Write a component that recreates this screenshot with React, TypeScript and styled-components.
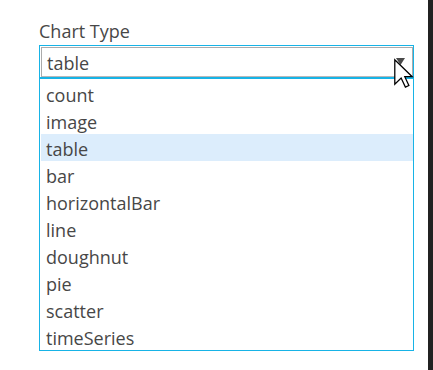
import styled, { createGlobalStyle } from 'styled-components';

const options = [
  'count',
  'image',
  'table',
  'bar',
  'horizontalBar',
  'line',
  'doughnut',
  'pie',
  'scatter',
  'timeSeries',
];

const selected = 'table';

export default function App() {
  return (
    <Page>
      <GlobalStyle />
      <Panel>
        <Label>Chart Type</Label>
        <Dropdown>
          <SelectBox>
            <SelectValue>{selected}</SelectValue>
            <Caret viewBox="0 0 9 7">
              <path d="M0 0 L9 0 L4.5 7 Z" fill="#4a4a4a" />
            </Caret>
          </SelectBox>
          <Options>
            {options.map((option) => (
              <Option key={option} $active={option === selected}>
                {option}
              </Option>
            ))}
          </Options>
        </Dropdown>
        <Cursor viewBox="0 0 12 19" preserveAspectRatio="none">
          <path
            d="M0.5 0.5 L0.5 16.5 L4.5 12.5 L7.2 18.4 L9.4 17.4 L6.8 11.6 L11.5 11.6 Z"
            fill="#fff"
            stroke="#000"
            strokeWidth="0.8"
            strokeLinejoin="miter"
          />
        </Cursor>
      </Panel>
      <ScrollEdge />
    </Page>
  );
}

const GlobalStyle = createGlobalStyle`
  html, body {
    margin: 0;
    padding: 0;
    background: #fff;
  }
  body {
    font-family: 'Open Sans', 'Noto Sans', sans-serif;
    color: #474747;
  }
`;

const Page = styled.div`
  width: 433px;
  height: 370px;
  display: flex;
  flex-direction: row;
  background: #fff;
  overflow: hidden;
`;

const Panel = styled.div`
  position: relative;
  flex: 1;
  padding: 21px 0 0 39px;
`;

const Label = styled.div`
  font-size: 18px;
  line-height: 20px;
  height: 20px;
  margin: 0 0 4px 0;
  color: #474747;
`;

const Dropdown = styled.div`
  width: 373px;
  border: 1px solid #17b3e6;
  background: #fff;
`;

const SelectBox = styled.div`
  margin: 1px 0 0 1px;
  height: 28px;
  border: 1px solid #ababab;
  border-bottom-color: #b8b8b8;
  display: flex;
  align-items: center;
  justify-content: space-between;
  padding: 0 7px 0 5px;
  box-sizing: content-box;
  position: relative;
  &::after {
    content: '';
    position: absolute;
    left: -2px;
    right: -2px;
    bottom: -3px;
    height: 2px;
    background: #17b3e6;
  }
`;

const SelectValue = styled.span`
  font-size: 18px;
  line-height: 28px;
  padding-top: 2px;
  color: #474747;
`;

const Caret = styled.svg`
  width: 9px;
  height: 7px;
  margin-top: -2px;
`;

const Options = styled.div`
  margin-top: 3px;
  padding: 0 0 0 1px;
  display: flex;
  flex-direction: column;
`;

const Option = styled.div<{ $active: boolean }>`
  height: 27px;
  line-height: 27px;
  padding: 2px 0 0 5px;
  box-sizing: border-box;
  font-size: 18px;
  color: #474747;
  background: ${(p) => (p.$active ? '#dcedfc' : 'transparent')};
`;

const Cursor = styled.svg`
  position: absolute;
  left: 394px;
  top: 59px;
  width: 19px;
  height: 29px;
  overflow: visible;
`;

const ScrollEdge = styled.div`
  width: 5px;
  height: 100%;
  background: #212121;
`;
